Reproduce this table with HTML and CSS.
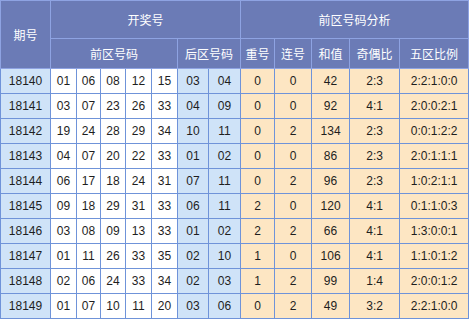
FILE: index.html
```html
<!DOCTYPE html>
<html lang="zh">
<head>
<meta charset="utf-8">
<link rel="stylesheet" href="styles.css">
</head>
<body>
<table class="grid">
  <colgroup>
    <col class="c-issue">
    <col class="c-n1"><col class="c-n2"><col class="c-n3"><col class="c-n4"><col class="c-n5">
    <col class="c-b1"><col class="c-b2">
    <col class="c-rep"><col class="c-con"><col class="c-sum"><col class="c-oe"><col class="c-zone">
  </colgroup>
  <thead>
    <tr class="h1">
      <th rowspan="2">期号</th>
      <th colspan="7">开奖号</th>
      <th colspan="5">前区号码分析</th>
    </tr>
    <tr class="h2">
      <th colspan="5">前区号码</th>
      <th colspan="2">后区号码</th>
      <th>重号</th><th>连号</th><th>和值</th><th>奇偶比</th><th>五区比例</th>
    </tr>
  </thead>
  <tbody>
    <tr><td class="iss">18140</td><td class="f">01</td><td class="f">06</td><td class="f">08</td><td class="f">12</td><td class="f">15</td><td class="b">03</td><td class="b">04</td><td class="a">0</td><td class="a">0</td><td class="a">42</td><td class="a">2:3</td><td class="a">2:2:1:0:0</td></tr>
    <tr><td class="iss">18141</td><td class="f">03</td><td class="f">07</td><td class="f">23</td><td class="f">26</td><td class="f">33</td><td class="b">04</td><td class="b">09</td><td class="a">0</td><td class="a">0</td><td class="a">92</td><td class="a">4:1</td><td class="a">2:0:0:2:1</td></tr>
    <tr><td class="iss">18142</td><td class="f">19</td><td class="f">24</td><td class="f">28</td><td class="f">29</td><td class="f">34</td><td class="b">10</td><td class="b">11</td><td class="a">0</td><td class="a">2</td><td class="a">134</td><td class="a">2:3</td><td class="a">0:0:1:2:2</td></tr>
    <tr><td class="iss">18143</td><td class="f">04</td><td class="f">07</td><td class="f">20</td><td class="f">22</td><td class="f">33</td><td class="b">01</td><td class="b">02</td><td class="a">0</td><td class="a">0</td><td class="a">86</td><td class="a">2:3</td><td class="a">2:0:1:1:1</td></tr>
    <tr><td class="iss">18144</td><td class="f">06</td><td class="f">17</td><td class="f">18</td><td class="f">24</td><td class="f">31</td><td class="b">07</td><td class="b">11</td><td class="a">0</td><td class="a">2</td><td class="a">96</td><td class="a">2:3</td><td class="a">1:0:2:1:1</td></tr>
    <tr><td class="iss">18145</td><td class="f">09</td><td class="f">18</td><td class="f">29</td><td class="f">31</td><td class="f">33</td><td class="b">06</td><td class="b">11</td><td class="a">2</td><td class="a">0</td><td class="a">120</td><td class="a">4:1</td><td class="a">0:1:1:0:3</td></tr>
    <tr><td class="iss">18146</td><td class="f">03</td><td class="f">08</td><td class="f">09</td><td class="f">13</td><td class="f">33</td><td class="b">01</td><td class="b">02</td><td class="a">2</td><td class="a">2</td><td class="a">66</td><td class="a">4:1</td><td class="a">1:3:0:0:1</td></tr>
    <tr><td class="iss">18147</td><td class="f">01</td><td class="f">11</td><td class="f">26</td><td class="f">33</td><td class="f">35</td><td class="b">02</td><td class="b">10</td><td class="a">1</td><td class="a">0</td><td class="a">106</td><td class="a">4:1</td><td class="a">1:1:0:1:2</td></tr>
    <tr><td class="iss">18148</td><td class="f">02</td><td class="f">06</td><td class="f">24</td><td class="f">33</td><td class="f">34</td><td class="b">02</td><td class="b">03</td><td class="a">1</td><td class="a">2</td><td class="a">99</td><td class="a">1:4</td><td class="a">2:0:0:1:2</td></tr>
    <tr><td class="iss">18149</td><td class="f">01</td><td class="f">07</td><td class="f">10</td><td class="f">11</td><td class="f">20</td><td class="b">03</td><td class="b">06</td><td class="a">0</td><td class="a">2</td><td class="a">49</td><td class="a">3:2</td><td class="a">2:2:1:0:0</td></tr>
  </tbody>
</table>
</body>
</html>
```

FILE: styles.css
```css
html, body {
  margin: 0;
  padding: 0;
  background: #ffffff;
}

.grid {
  border-collapse: collapse;
  table-layout: fixed;
  width: 469px;
  font-family: "Liberation Sans", Arial, "Noto Sans CJK SC", sans-serif;
  font-size: 12px;
  color: #1e1e1e;
}

.c-issue { width: 50px; }
.c-n1 { width: 26px; }
.c-n2 { width: 24px; }
.c-n3 { width: 25px; }
.c-n4 { width: 26px; }
.c-n5 { width: 26px; }
.c-b1 { width: 31px; }
.c-b2 { width: 32px; }
.c-rep { width: 34px; }
.c-con { width: 37px; }
.c-sum { width: 38px; }
.c-oe { width: 50px; }
.c-zone { width: 69px; }

.grid th {
  background: #6b7bb6;
  color: #ffffff;
  font-weight: normal;
  font-family: "Noto Sans CJK SC", "Liberation Sans", sans-serif;
  font-size: 12px;
  border: 1px solid #8ea3e2;
  padding: 0;
  text-align: center;
}

.h1 th { height: 37px; }
.h2 th { height: 29px; }

.grid td {
  border: 1px solid #6f93d9;
  padding: 0;
  height: 24px;
  text-align: center;
}

.grid td.iss { background: #cfe3f8; }
.grid td.f { background: #ffffff; }
.grid td.b { background: #cfe3f8; }
.grid td.a { background: #fde6c3; }
```
